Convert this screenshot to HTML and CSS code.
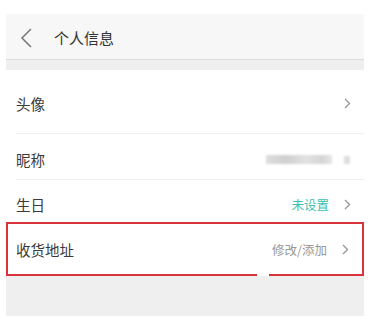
FILE: index.html
```html
<!DOCTYPE html>
<html lang="zh">
<head>
<meta charset="utf-8">
<link rel="stylesheet" href="styles.css">
</head>
<body>
<div class="page">
  <div class="header">
    <svg class="back" width="14" height="20" viewBox="0 0 14 20"><polyline points="12,1 3,10 12,19" fill="none" stroke="#777" stroke-width="1.5"/></svg>
    <span class="title">个人信息</span>
  </div>
  <div class="gap"></div>
  <div class="list">
    <div class="row row-avatar">
      <span class="label">头像</span>
      <span class="right"><svg class="chev" width="7" height="11" viewBox="0 0 7 11"><polyline points="1,1 5.5,5.5 1,10" fill="none" stroke="#999" stroke-width="1.4"/></svg></span>
    </div>
    <div class="row row-nick">
      <span class="label">昵称</span>
      <span class="right"><span class="blur-name"></span><span class="blur-sq"></span></span>
    </div>
    <div class="row row-birth">
      <span class="label">生日</span>
      <span class="right"><span class="val teal">未设置</span><svg class="chev" width="7" height="11" viewBox="0 0 7 11"><polyline points="1,1 5.5,5.5 1,10" fill="none" stroke="#999" stroke-width="1.4"/></svg></span>
    </div>
    <div class="row row-addr">
      <span class="label">收货地址</span>
      <span class="right"><span class="val gray">修改/添加</span><svg class="chev" width="7" height="11" viewBox="0 0 7 11"><polyline points="1,1 5.5,5.5 1,10" fill="none" stroke="#999" stroke-width="1.4"/></svg></span>
      <span class="notch"></span>
    </div>
  </div>
  <div class="footer-gap"></div>
</div>
</body>
</html>
```
FILE: styles.css
```css
html, body {
  margin: 0;
  padding: 0;
  background: #fff;
}
body {
  font-family: "Noto Sans CJK SC", "Noto Sans", sans-serif;
  color: #333;
}
.page {
  margin: 14px 0 0 6px;
  width: 358px;
}
.header {
  height: 46px;
  background: #f7f7f7;
  border-bottom: 1px solid #dcdcdc;
  display: flex;
  align-items: center;
  box-sizing: border-box;
}
.back {
  margin-left: 13px;
  margin-top: 3px;
}
.title {
  margin-left: 21px;
  font-size: 15px;
  color: #333;
  font-weight: 400;
  margin-top: 2px;
}
.gap {
  height: 10px;
  background: #efefef;
}
.list {
  background: #fff;
}
.row {
  display: flex;
  align-items: center;
  justify-content: space-between;
  margin-left: 10px;
  padding-right: 13px;
  box-sizing: border-box;
  position: relative;
}
.label {
  font-size: 14.5px;
  color: #3a3a3a;
}
.right {
  display: flex;
  align-items: center;
}
.val {
  font-size: 12.5px;
  margin-right: 15px;
}
.teal { color: #3dbfb0; }
.gray { color: #999; }
.chev {
  display: block;
}
.row-avatar {
  height: 64px;
  border-bottom: 1px solid #f0f0f0;
  padding-top: 3px;
}
.row-nick {
  height: 46px;
  border-bottom: 1px solid #f0f0f0;
  padding-top: 6px;
}
.row-birth {
  height: 42px;
  padding-top: 6px;
}
.blur-name {
  display: block;
  width: 66px;
  height: 9px;
  background: linear-gradient(90deg, #dedede, #cfcfcf 30%, #e2e2e2 60%, #d5d5d5 85%, #e6e6e6);
  filter: blur(1px);
  margin-right: 12px;
}
.blur-sq {
  display: block;
  width: 6px;
  height: 8px;
  background: #dedede;
  filter: blur(0.8px);
  margin-right: 1px;
}
.row-addr {
  height: 54px;
  margin-left: 0;
  padding-left: 8px;
  border: 2px solid #d8323c;
  padding-top: 1px;
}
.notch {
  position: absolute;
  left: 249px;
  bottom: -2px;
  width: 12px;
  height: 3px;
  background: #fff;
}
.footer-gap {
  height: 40px;
  background: #efefef;
}
```
